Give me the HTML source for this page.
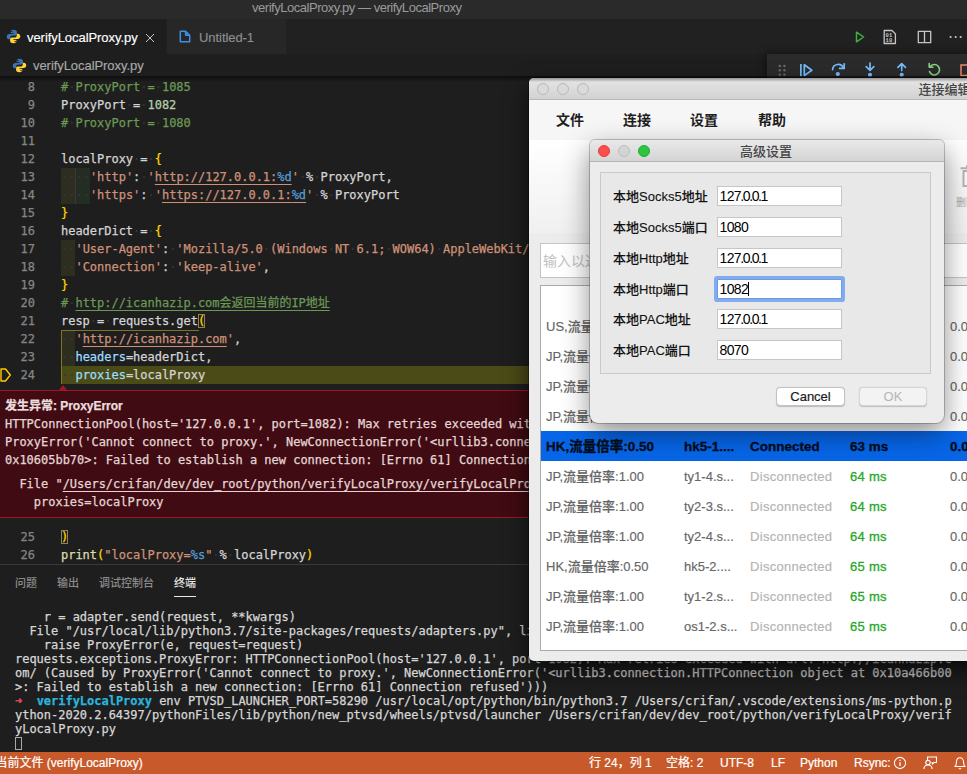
<!DOCTYPE html>
<html lang="zh">
<head>
<meta charset="utf-8">
<title>verifyLocalProxy.py — verifyLocalProxy</title>
<style>
*{box-sizing:border-box;margin:0;padding:0}
html,body{width:967px;height:774px;overflow:hidden;background:#1e1e1e}
body{position:relative;font-family:"Liberation Sans","Noto Sans CJK SC",sans-serif;font-size:13px;color:#ccc}
.abs{position:absolute}
.mono{font-family:"DejaVu Sans Mono","Liberation Mono","Noto Sans CJK SC",monospace;font-size:12px;letter-spacing:-0.02px;-webkit-text-stroke:0.25px currentColor}
/* ---------- VS Code chrome ---------- */
#titlebar{left:0;top:0;width:967px;height:18.5px;background:#2a2a2a}
#titlebar span{position:absolute;left:252px;top:-1px;font-size:13px;color:#9a9a9a;letter-spacing:-0.47px;white-space:nowrap;line-height:18px}
#tabs{left:0;top:19px;width:967px;height:35px;background:#212121}
#tab1{left:0;top:0;width:166px;height:35px;background:#1e1e1e}
#tab2{left:167px;top:0;width:119px;height:35px;background:#272727}
.tablabel{position:absolute;top:10px;-webkit-text-stroke:0.15px currentColor;letter-spacing:-0.06px;font-size:13px;line-height:18px;white-space:nowrap}
#crumbs{left:0;top:54px;width:967px;height:22px;background:#1e1e1e}
/* ---------- editor ---------- */
#editor{left:0;top:76px;width:967px;height:488px;background:#1e1e1e;overflow:hidden}
.ln{position:absolute;left:0;width:35px;text-align:right;color:#858585;height:18px;line-height:18px}
.cl{position:absolute;left:61px;height:18px;line-height:18px;white-space:pre;color:#d4d4d4}
.c{color:#6a9955}.n{color:#b5cea8}.s{color:#ce9178}.k{color:#569cd6}.g{color:#ffd700}.p{color:#9cdcfe}.f{color:#dcdcaa}
.u{text-decoration:underline;text-underline-offset:3px;text-decoration-thickness:1px}
.w{color:#383838;-webkit-text-stroke:0}
.bx{box-shadow:inset 0 0 0 1px #8d8650;}
/* exception widget */
#exc{left:0;top:314px;width:967px;height:128px;background:#400b12;border-top:1px solid #a01626;border-bottom:1px solid #a01626;color:#e4d6d6}
#exc div{position:absolute;white-space:pre;height:18px;line-height:18px}
/* ---------- panel ---------- */
#panel{left:0;top:564px;width:967px;height:188px;background:#1e1e1e;border-top:1px solid #3a3a3a}
.ptab{position:absolute;top:9px;font-weight:500;font-size:11px;line-height:18px;color:#8b8b8b;white-space:nowrap}
.tl{position:absolute;left:15px;height:14px;line-height:14px;white-space:pre;color:#d6d6d6}
/* ---------- status ---------- */
#status{left:0;top:752px;width:967px;height:22px;background:#c8592a;color:#fff;font-size:12px;-webkit-text-stroke:0.2px #fff}
#status span{position:absolute;top:2px;line-height:18px;white-space:nowrap}

/* ---------- mac window ---------- */
#win{left:529px;top:78px;width:460px;height:583px;background:#ececec;border-radius:5px 5px 5px 5px;box-shadow:0 10px 24px rgba(0,0,0,.65),0 0 0 1px rgba(0,0,0,.35);overflow:hidden;color:#222;font-family:"Liberation Sans","Noto Sans CJK SC",sans-serif}
#wtitle{left:0;top:0;width:460px;height:22px;background:linear-gradient(#e6e6e6,#d2d2d2);border-bottom:1px solid #b8b8b8}
.tlc{position:absolute;width:12px;height:12px;border-radius:50%;top:5px}
#wmenu{left:0;top:22px;width:460px;height:40px;background:#f6f6f6}
#wmenu span{position:absolute;top:10px;font-size:14px;font-weight:bold;line-height:20px;color:#1e1e1e}
#wtool{left:0;top:62px;width:460px;height:93px;background:linear-gradient(#ffffff,#f0f0f0)}
#wsearch{left:11px;top:165px;width:460px;height:35px;background:#fff;border:1px solid #c4c4c4}
#wtable{left:11px;top:207px;width:460px;height:366px;background:#fff;border:1px solid #a9a9a9}
.row{position:absolute;left:0;width:460px;height:30px;font-size:13px;line-height:30px;color:#666;white-space:nowrap;font-weight:500;-webkit-text-stroke:0.15px currentColor}
.row span{position:absolute;top:1px}
.row .c1{left:5px}.row .c2{left:143px}.row .c3{left:209px;color:#b3b3b3;letter-spacing:.3px}.row .c4{left:309px;color:#25a825;-webkit-text-stroke:0.3px currentColor;letter-spacing:.3px}.row .c5{left:409px}
.row.sel{background:#0766e8;color:#030c1a;font-weight:bold;font-size:13.5px;-webkit-text-stroke:0.3px #030c1a}
.row.sel .c3,.row.sel .c4{color:#030c1a;-webkit-text-stroke:0.3px #030c1a;letter-spacing:0}
/* dialog */
#dlg{left:590px;top:140px;width:354px;height:283px;background:#ececec;border-radius:5px 5px 8px 8px;box-shadow:0 10px 28px rgba(0,0,0,.45),0 0 0 1px rgba(0,0,0,.22);overflow:hidden;color:#111;font-family:"Liberation Sans","Noto Sans CJK SC",sans-serif}
#dtitle{left:0;top:0;width:354px;height:22px;background:linear-gradient(#e9e9e9,#d4d4d4);border-bottom:1px solid #b5b5b5}
#dtitle span{position:absolute;left:-1px;width:354px;text-align:center;top:2px;line-height:20px;font-size:13px;font-weight:500;color:#444}
#grp{left:10px;top:32px;width:331px;height:202px;border:1px solid #c9c9c9;background:#e8e8e8}
.lab{position:absolute;left:23px;font-size:13px;font-weight:500;-webkit-text-stroke:0.1px #111;line-height:20px;color:#111;white-space:nowrap}
.inp{position:absolute;left:126.5px;width:125.5px;height:20px;background:#fff;border:1px solid #c6c6c6;font-size:14px;line-height:19px;padding-left:2px;color:#000;white-space:nowrap;letter-spacing:-0.6px}
.inp i{font-style:normal;margin:0 -0.8px}
.btn{position:absolute;top:246.5px;height:19.5px;border-radius:4px;background:#fff;border:1px solid #c2c2c2;font-size:13px;line-height:18px;text-align:center;box-shadow:0 0.5px 1px rgba(0,0,0,.2)}
</style>
</head>
<body>
<div id="titlebar" class="abs"><span>verifyLocalProxy.py — verifyLocalProxy</span></div>

<div id="tabs" class="abs">
  <div id="tab1" class="abs">
    <svg class="abs" style="left:5.7px;top:9.7px" width="15" height="15" viewBox="0 0 16 16"><path fill="#3975b2" d="M7.9 0.8C5.3 0.8 5 1.9 5 2.9V4.6H8.1V5.3H3.5C2 5.3 0.8 6.4 0.8 8.2C0.8 10 1.9 11 3.2 11H4.5V9.2C4.5 7.9 5.6 6.9 6.9 6.9H9.9C10.9 6.9 11.6 6.1 11.6 5.1V2.9C11.6 1.9 10.7 0.8 7.9 0.8Z"/><circle cx="6.3" cy="2.7" r="0.75" fill="#1e1e1e"/><path fill="#ffd43b" d="M8.1 15.2C10.7 15.2 11 14.1 11 13.1V11.4H7.9V10.7H12.5C14 10.7 15.2 9.6 15.2 7.8C15.2 6 14.1 5 12.8 5H11.5V6.8C11.5 8.1 10.4 9.1 9.1 9.1H6.1C5.1 9.1 4.4 9.9 4.4 10.9V13.1C4.4 14.1 5.3 15.2 8.1 15.2Z"/><circle cx="9.7" cy="13.3" r="0.75" fill="#1e1e1e"/></svg>
<svg class="abs" style="left:145px;top:14px" width="10" height="10" viewBox="0 0 10 10"><path d="M1 1L9 9M9 1L1 9" stroke="#cfcfcf" stroke-width="0.95" fill="none"/></svg>
    <span class="tablabel" style="left:27px;color:#fff">verifyLocalProxy.py</span>
  </div>
  <div id="tab2" class="abs">
    <svg class="abs" style="left:12px;top:11px" width="12" height="13" viewBox="0 0 12 13"><path d="M1.3 1.2H6.6L10.7 5.3V11.8H1.3Z M6.6 1.2V5.3H10.7" stroke="#3f8fe8" stroke-width="1.5" fill="none" stroke-linejoin="round"/></svg>
    <span class="tablabel" style="left:32px;color:#8e8e8e">Untitled-1</span>
  </div>

  <svg class="abs" style="left:854px;top:11px" width="12" height="14" viewBox="0 0 12 14"><path d="M2.5 2.2L9.6 7L2.5 11.8Z" stroke="#3fae49" stroke-width="1.5" fill="none" stroke-linejoin="round"/></svg>
  <svg class="abs" style="left:883px;top:10px" width="14" height="16" viewBox="0 0 14 16"><path d="M1.2 1.5H9L12.4 4.9V14.5H1.2Z" stroke="#c5c5c5" stroke-width="1.3" fill="none" stroke-linejoin="round"/><text x="2.6" y="7.6" font-family="Liberation Mono,monospace" font-size="5.5" font-weight="bold" fill="#c5c5c5">01</text><text x="2.6" y="12.6" font-family="Liberation Mono,monospace" font-size="5.5" font-weight="bold" fill="#c5c5c5">10</text></svg>
  <svg class="abs" style="left:917px;top:11px" width="15" height="14" viewBox="0 0 15 14"><path d="M1.3 1.3H13.7V12.7H1.3Z M7.5 1.3V12.7" stroke="#c5c5c5" stroke-width="1.3" fill="none" stroke-linejoin="round"/></svg>
  <svg class="abs" style="left:948px;top:16px" width="16" height="4" viewBox="0 0 16 4"><circle cx="2.6" cy="2" r="1.1" fill="#c5c5c5"/><circle cx="7.7" cy="2" r="1.1" fill="#c5c5c5"/><circle cx="12.7" cy="2" r="1.1" fill="#c5c5c5"/></svg>
</div>

<div id="crumbs" class="abs">
<svg class="abs" style="left:11.7px;top:3.5px" width="15" height="15" viewBox="0 0 16 16"><path fill="#3975b2" d="M7.9 0.8C5.3 0.8 5 1.9 5 2.9V4.6H8.1V5.3H3.5C2 5.3 0.8 6.4 0.8 8.2C0.8 10 1.9 11 3.2 11H4.5V9.2C4.5 7.9 5.6 6.9 6.9 6.9H9.9C10.9 6.9 11.6 6.1 11.6 5.1V2.9C11.6 1.9 10.7 0.8 7.9 0.8Z"/><circle cx="6.3" cy="2.7" r="0.75" fill="#1e1e1e"/><path fill="#ffd43b" d="M8.1 15.2C10.7 15.2 11 14.1 11 13.1V11.4H7.9V10.7H12.5C14 10.7 15.2 9.6 15.2 7.8C15.2 6 14.1 5 12.8 5H11.5V6.8C11.5 8.1 10.4 9.1 9.1 9.1H6.1C5.1 9.1 4.4 9.9 4.4 10.9V13.1C4.4 14.1 5.3 15.2 8.1 15.2Z"/><circle cx="9.7" cy="13.3" r="0.75" fill="#1e1e1e"/></svg>
  <span class="tablabel" style="left:33px;top:3px;color:#a9a9a9">verifyLocalProxy.py</span>
</div>

<div id="editor" class="abs mono">
<div class="abs" style="left:0;top:0;width:967px;height:6px;background:linear-gradient(rgba(0,0,0,.55),rgba(0,0,0,0));z-index:3"></div>
<div class="abs" style="left:61px;top:92px;width:14.4px;height:36px;background:rgba(255,255,64,.07)"></div>
<div class="abs" style="left:75.4px;top:92px;width:14.4px;height:36px;background:rgba(127,255,127,.07)"></div>
<div class="abs" style="left:61px;top:164px;width:14.4px;height:36px;background:rgba(255,255,64,.07)"></div>
<div class="abs" style="left:61px;top:254px;width:14.4px;height:54px;background:rgba(255,255,64,.07)"></div>
<div class="abs" style="left:75px;top:92px;width:1px;height:36px;background:#383838"></div>

<div class="abs" style="left:61px;top:290px;width:906px;height:18px;background:#4b4b18"></div>
<div class="abs" style="left:61px;top:254px;width:138px;height:1px;background:#7d7428"></div>
<div class="abs" style="left:61px;top:254px;width:1px;height:54px;background:#7d7428"></div>
<svg class="abs" style="left:0;top:291.8px" width="12" height="14" viewBox="0 0 12 14"><path d="M1 1H5.5L10.3 7L5.5 13H1Z" stroke="#ffcc00" stroke-width="1.4" fill="none" stroke-linejoin="round"/></svg>
<div class="ln" style="top:2px">8</div><div class="cl" style="top:2px"><span class="c">#<span class="w">·</span>ProxyPort<span class="w">·</span>=<span class="w">·</span>1085</span></div>
<div class="ln" style="top:20px">9</div><div class="cl" style="top:20px">ProxyPort<span class="w">·</span>=<span class="w">·</span><span class="n">1082</span></div>
<div class="ln" style="top:38px">10</div><div class="cl" style="top:38px"><span class="c">#<span class="w">·</span>ProxyPort<span class="w">·</span>=<span class="w">·</span>1080</span></div>
<div class="ln" style="top:56px">11</div><div class="cl" style="top:56px"></div>
<div class="ln" style="top:74px">12</div><div class="cl" style="top:74px">localProxy<span class="w">·</span>=<span class="w">·</span><span class="g">{</span></div>
<div class="ln" style="top:92px">13</div><div class="cl" style="top:92px"><span class="w">·</span><span class="w">·</span><span class="w">·</span><span class="w">·</span><span class="s">'http'</span>:<span class="w">·</span><span class="s">'<span class="u">http://127.0.0.1:<span class="k">%d</span></span>'</span><span class="w">·</span>%<span class="w">·</span>ProxyPort,</div>
<div class="ln" style="top:110px">14</div><div class="cl" style="top:110px"><span class="w">·</span><span class="w">·</span><span class="w">·</span><span class="w">·</span><span class="s">'https'</span>:<span class="w">·</span><span class="s">'<span class="u">https://127.0.0.1:<span class="k">%d</span></span>'</span><span class="w">·</span>%<span class="w">·</span>ProxyPort</div>
<div class="ln" style="top:128px">15</div><div class="cl" style="top:128px"><span class="g">}</span></div>
<div class="ln" style="top:146px">16</div><div class="cl" style="top:146px">headerDict<span class="w">·</span>=<span class="w">·</span><span class="g">{</span></div>
<div class="ln" style="top:164px">17</div><div class="cl" style="top:164px"><span class="w">·</span><span class="w">·</span><span class="s">'User-Agent'</span>:<span class="w">·</span><span class="s">'Mozilla/5.0<span class="w">·</span>(Windows<span class="w">·</span>NT<span class="w">·</span>6.1;<span class="w">·</span>WOW64)<span class="w">·</span>AppleWebKit/537.36<span class="w">·</span>(KHTML,<span class="w">·</span>like<span class="w">·</span>Gecko)'</span>,</div>
<div class="ln" style="top:182px">18</div><div class="cl" style="top:182px"><span class="w">·</span><span class="w">·</span><span class="s">'Connection'</span>:<span class="w">·</span><span class="s">'keep-alive'</span>,</div>
<div class="ln" style="top:200px">19</div><div class="cl" style="top:200px"><span class="g">}</span></div>
<div class="ln" style="top:218px">20</div><div class="cl" style="top:218px"><span class="c">#<span class="w">·</span><span class="u">http://icanhazip.com会返回当前的IP地址</span></span></div>
<div class="ln" style="top:236px">21</div><div class="cl" style="top:236px">resp<span class="w">·</span>=<span class="w">·</span>requests.get<span class="g bx">(</span></div>
<div class="ln" style="top:254px">22</div><div class="cl" style="top:254px"><span class="w">·</span><span class="w">·</span><span class="s">'<span class="u">http://icanhazip.com</span>'</span>,</div>
<div class="ln" style="top:272px">23</div><div class="cl" style="top:272px"><span class="w">·</span><span class="w">·</span><span class="p">headers</span>=headerDict,</div>
<div class="ln" style="top:290px">24</div><div class="cl" style="top:290px"><span class="w">·</span><span class="w">·</span><span class="p">proxies</span>=localProxy</div>
<div class="ln" style="top:452px">25</div><div class="cl" style="top:452px"><span class="g bx">)</span></div>
<div class="ln" style="top:470px">26</div><div class="cl" style="top:470px"><span class="f">print</span><span class="g">(</span><span class="s">"localProxy=<span class="k">%s</span>"</span><span class="w">·</span>%<span class="w">·</span>localProxy<span class="g">)</span></div>

<div class="abs" style="left:59.3px;top:309px;width:0;height:0;border-left:4px solid transparent;border-right:4px solid transparent;border-bottom:5px solid #a01626"></div>
<div id="exc" class="abs">
<div style="left:5px;top:6px;font-family:'Liberation Sans','Noto Sans CJK SC',sans-serif;font-size:12px;font-weight:bold;color:#eadede">发生异常: ProxyError</div>
<div style="left:5px;top:24px">HTTPConnectionPool(host='127.0.0.1', port=1082): Max retries exceeded with url: http://icanhazip.com/ (Caused by</div>
<div style="left:5px;top:42px">ProxyError('Cannot connect to proxy.', NewConnectionError('&lt;urllib3.connection.HTTPConnection object at</div>
<div style="left:5px;top:60px">0x10605bb70&gt;: Failed to establish a new connection: [Errno 61] Connection refused')))</div>
<div style="left:5px;top:84px">  File "<span class="u">/Users/crifan/dev/dev_root/python/verifyLocalProxy/verifyLocalProxy.py</span>", line 24, in &lt;module&gt;</div>
<div style="left:5px;top:102px">    proxies=localProxy</div>
</div>
</div>

<div id="panel" class="abs">
  <span class="ptab" style="left:15px">问题</span>
  <span class="ptab" style="left:57px">输出</span>
  <span class="ptab" style="left:99px">调试控制台</span>
  <span class="ptab" style="left:174px;color:#e7e7e7">终端</span>
  <div class="abs" style="left:174px;top:31px;width:22px;height:1px;background:#e7e7e7"></div>
<div class="mono">
<div class="tl" style="top:45px">    r = adapter.send(request, **kwargs)</div>
<div class="tl" style="top:59px">  File "/usr/local/lib/python3.7/site-packages/requests/adapters.py", line 449, in send</div>
<div class="tl" style="top:73px">    raise ProxyError(e, request=request)</div>
<div class="tl" style="top:87px">requests.exceptions.ProxyError: HTTPConnectionPool(host='127.0.0.1', port=1082): Max retries exceeded with url: http://icanhazip.c</div>
<div class="tl" style="top:101px">om/ (Caused by ProxyError('Cannot connect to proxy.', NewConnectionError('&lt;urllib3.connection.HTTPConnection object at 0x10a466b00</div>
<div class="tl" style="top:115px">&gt;: Failed to establish a new connection: [Errno 61] Connection refused')))</div>
<div class="tl" style="top:129px"><span style="display:inline-block;width:7.22px;color:#e0505a;font-weight:bold;overflow:visible">➜</span>  <span style="color:#2bb5dc;font-weight:bold">verifyLocalProxy</span> env PTVSD_LAUNCHER_PORT=58290 /usr/local/opt/python/bin/python3.7 /Users/crifan/.vscode/extensions/ms-python.p</div>
<div class="tl" style="top:143px">ython-2020.2.64397/pythonFiles/lib/python/new_ptvsd/wheels/ptvsd/launcher /Users/crifan/dev/dev_root/python/verifyLocalProxy/verif</div>
<div class="tl" style="top:157px">yLocalProxy.py</div>
<div class="abs" style="left:15px;top:172px;width:7px;height:13px;border:1px solid #aaa"></div>
</div>
</div>



<div id="dbg" class="abs" style="left:767px;top:54px;width:210px;height:32px;background:#2b2b2b;box-shadow:0 0 8px 2px rgba(0,0,0,.4)">
  <svg class="abs" style="left:0;top:0" width="200" height="32" viewBox="0 0 200 32">
    <g fill="#6b6b6b"><circle cx="12.8" cy="12" r="1.2"/><circle cx="17.4" cy="12" r="1.2"/><circle cx="12.8" cy="16.3" r="1.2"/><circle cx="17.4" cy="16.3" r="1.2"/><circle cx="12.8" cy="20.6" r="1.2"/><circle cx="17.4" cy="20.6" r="1.2"/></g>
    <g stroke="#75beff" stroke-width="1.7" fill="none" stroke-linejoin="round" stroke-linecap="round">
      <path d="M33.9 10V22.3" stroke-linecap="butt"/><path d="M37.3 10.8L44.8 16.2L37.3 21.6Z"/>
      <path d="M65.6 15.6A5.6 5.6 0 0 1 76.4 14"/><path d="M77.2 9.8V14.4H72.6"/>
      <path d="M103 9V16M99.2 12.6L103 16.4L106.8 12.6"/>
      <path d="M134.7 16.4V10M130.9 13.4L134.7 9.6L138.5 13.4"/>
    </g>
    <g fill="#75beff"><circle cx="70.8" cy="20" r="2.1"/><circle cx="103" cy="20.8" r="2.1"/><circle cx="134.7" cy="20.8" r="2.1"/></g>
    <g stroke="#89d185" stroke-width="1.6" fill="none" stroke-linecap="round" stroke-linejoin="round"><path d="M163.2 12.6A5.2 5.2 0 1 1 162.5 17.6"/><path d="M162.2 9.6V13.3H165.9"/></g>
    <path d="M194 11H206V21.4H194Z" stroke="#f48771" stroke-width="1.5" fill="none"/>
  </svg>
</div>

<div id="win" class="abs">
  <div id="wtitle" class="abs">
    <div class="tlc" style="left:8px;background:#dadada;border:1px solid #b8b8b8"></div>
    <div class="tlc" style="left:28px;background:#dadada;border:1px solid #b8b8b8"></div>
    <div class="tlc" style="left:48px;background:#dadada;border:1px solid #b8b8b8"></div>
    <span class="abs" style="left:389.5px;top:2px;font-size:13px;line-height:20px;font-weight:500;color:#464646;white-space:nowrap">连接编辑器</span>
  </div>
  <div id="wmenu" class="abs">
    <span style="left:27px">文件</span><span style="left:94px">连接</span><span style="left:161px">设置</span><span style="left:229px">帮助</span>
  </div>
  <div id="wtool" class="abs">
    <svg class="abs" style="left:430px;top:24px" width="24" height="24" viewBox="0 0 24 24"><path d="M1.5 4.2H22.5M8 4V2H16V4M4.5 7V22H19.5V7Z" stroke="#b4b4b4" stroke-width="2" fill="none"/></svg>
    <span class="abs" style="left:427px;top:57px;font-size:10px;line-height:12px;color:#a8a8a8;white-space:nowrap">删除</span>
  </div>
  <div id="wsearch" class="abs"><span class="abs" style="left:2px;top:6px;font-size:14px;line-height:22px;color:#c2c2c2;white-space:nowrap">输入以过滤</span></div>
  <div id="wtable" class="abs">
    <div class="row" style="top:25px"><span class="c1">US,流量倍率:1.00</span><span class="c5">0.0</span></div>
    <div class="row" style="top:55px"><span class="c1">JP,流量倍率:1.00</span><span class="c5">0.0</span></div>
    <div class="row" style="top:85px"><span class="c1">JP,流量倍率:1.00</span><span class="c5">0.0</span></div>
    <div class="row" style="top:115px"><span class="c1">JP,流量倍率:1.00</span><span class="c5">0.0</span></div>
    <div class="row sel" style="top:145px"><span class="c1">HK,流量倍率:0.50</span><span class="c2">hk5-1....</span><span class="c3">Connected</span><span class="c4">63 ms</span><span class="c5">0.0</span></div>
    <div class="row" style="top:175px"><span class="c1">JP,流量倍率:1.00</span><span class="c2">ty1-4.s...</span><span class="c3">Disconnected</span><span class="c4">64 ms</span><span class="c5">0.0</span></div>
    <div class="row" style="top:205px"><span class="c1">JP,流量倍率:1.00</span><span class="c2">ty2-3.s...</span><span class="c3">Disconnected</span><span class="c4">64 ms</span><span class="c5">0.0</span></div>
    <div class="row" style="top:235px"><span class="c1">JP,流量倍率:1.00</span><span class="c2">ty2-4.s...</span><span class="c3">Disconnected</span><span class="c4">64 ms</span><span class="c5">0.0</span></div>
    <div class="row" style="top:265px"><span class="c1">HK,流量倍率:0.50</span><span class="c2">hk5-2....</span><span class="c3">Disconnected</span><span class="c4">65 ms</span><span class="c5">0.0</span></div>
    <div class="row" style="top:295px"><span class="c1">JP,流量倍率:1.00</span><span class="c2">ty1-2.s...</span><span class="c3">Disconnected</span><span class="c4">65 ms</span><span class="c5">0.0</span></div>
    <div class="row" style="top:325px"><span class="c1">JP,流量倍率:1.00</span><span class="c2">os1-2.s...</span><span class="c3">Disconnected</span><span class="c4">65 ms</span><span class="c5">0.0</span></div>
  </div>
</div>

<div id="dlg" class="abs">
  <div id="dtitle" class="abs">
    <div class="tlc" style="left:8px;background:#fc4e4b;border:1px solid #de3d3b"></div>
    <div class="tlc" style="left:28px;background:#d4d4d4;border:1px solid #bdbdbd"></div>
    <div class="tlc" style="left:48px;background:#2bc640;border:1px solid #1eab30"></div>
    <span>高级设置</span>
  </div>
  <div id="grp" class="abs"></div>
  <div class="lab" style="top:47px">本地Socks5地址</div><div class="inp" style="top:46px">127<i>.</i>0<i>.</i>0<i>.</i>1</div>
  <div class="lab" style="top:78px">本地Socks5端口</div><div class="inp" style="top:77px">1080</div>
  <div class="lab" style="top:109px">本地Http地址</div><div class="inp" style="top:108px">127<i>.</i>0<i>.</i>0<i>.</i>1</div>
  <div class="lab" style="top:140px">本地Http端口</div><div class="inp" style="top:139px;box-shadow:0 0 0 3px rgba(96,152,240,.75);border-color:#6a9be6;border-radius:1px">1082<span style="display:inline-block;width:1px;height:14px;background:#000;vertical-align:-2px"></span></div>
  <div class="lab" style="top:170px">本地PAC地址</div><div class="inp" style="top:169px">127<i>.</i>0<i>.</i>0<i>.</i>1</div>
  <div class="lab" style="top:201px">本地PAC端口</div><div class="inp" style="top:200px">8070</div>
  <div class="btn" style="left:186px;width:69px;color:#1a1a1a;-webkit-text-stroke:0.2px #1a1a1a">Cancel</div>
  <div class="btn" style="left:269px;width:68px;color:#b5b5b5;background:#f3f3f3;border-color:#d6d6d6">OK</div>
</div>

<div id="status" class="abs">
  <span style="left:-4.5px">当前文件 (verifyLocalProxy)</span>
  <span style="left:589px">行 24，列 1</span>
  <span style="left:666px">空格: 2</span>
  <span style="left:720px">UTF-8</span>
  <span style="left:771px">LF</span>
  <span style="left:800px">Python</span>
  <span style="left:854px">Rsync:</span>
  <svg class="abs" style="left:893px;top:4px" width="14" height="14" viewBox="0 0 14 14"><circle cx="7" cy="7" r="5.6" stroke="#fff" stroke-width="1.1" fill="none"/><path d="M7 6.2V10" stroke="#fff" stroke-width="1.3"/><circle cx="7" cy="4.3" r="0.8" fill="#fff"/></svg>
  <svg class="abs" style="left:922px;top:4px" width="16" height="14" viewBox="0 0 16 14"><path d="M5.5 4.5V1H14.5V6.5H12L10.3 8.2V6.5H9.6" stroke="#fff" stroke-width="1.1" fill="none" stroke-linejoin="round"/><circle cx="6" cy="6.6" r="2.2" stroke="#fff" stroke-width="1.1" fill="none"/><path d="M1.8 13C2 10.5 3.8 9 6 9C8.2 9 10 10.5 10.2 13" stroke="#fff" stroke-width="1.1" fill="none"/></svg>
  <svg class="abs" style="left:953px;top:4px" width="14" height="14" viewBox="0 0 14 14"><path d="M2 10.5H12C11 9.5 10.6 8.6 10.6 6.5C10.6 3.5 9 1.8 7 1.8C5 1.8 3.4 3.5 3.4 6.5C3.4 8.6 3 9.5 2 10.5Z" stroke="#fff" stroke-width="1.1" fill="none" stroke-linejoin="round"/><path d="M5.8 12.3C6.3 13 7.7 13 8.2 12.3" stroke="#fff" stroke-width="1.1" fill="none"/></svg>
</div>
</body>
</html>
